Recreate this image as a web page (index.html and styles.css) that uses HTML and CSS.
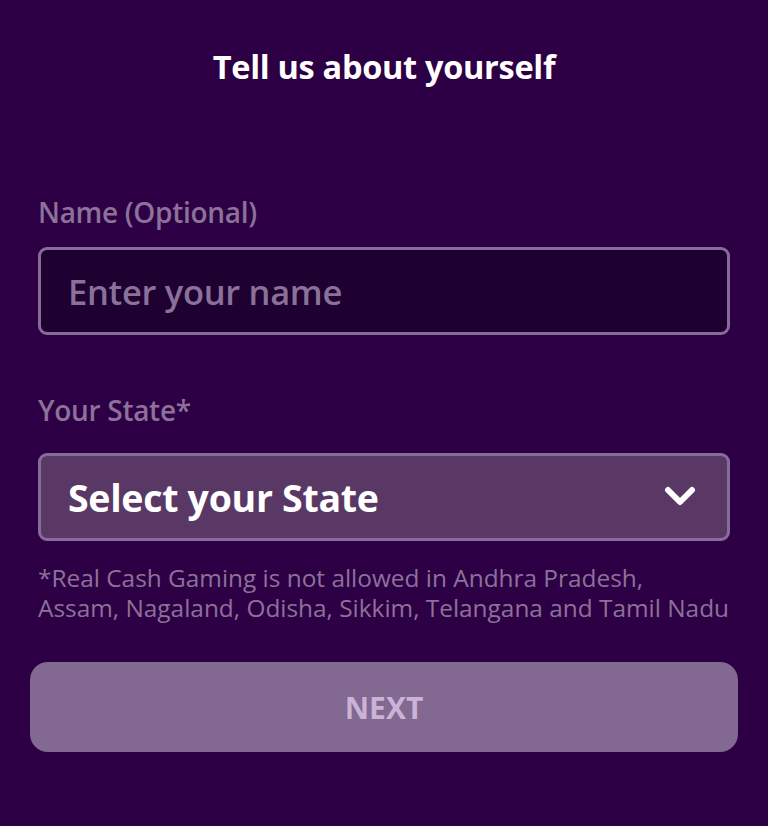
FILE: index.html
```html
<!DOCTYPE html>
<html lang="en">
<head>
<meta charset="utf-8">
<title>Tell us about yourself</title>
<link rel="stylesheet" href="styles.css">
</head>
<body>
<main class="page">
  <h1 class="title">Tell us about yourself</h1>
  <form class="form">
    <div class="field field-name">
      <label class="label label-name" for="name">Name (Optional)</label>
      <div class="input-box">
        <input id="name" class="input" type="text" placeholder="Enter your name">
      </div>
    </div>
    <div class="field field-state">
      <label class="label label-state">Your State*</label>
      <div class="select-box">
        <span class="select-text">Select your State</span>
        <svg class="chevron" width="32" height="22" viewBox="0 0 32 22" aria-hidden="true">
          <path d="M4 4 L16 16 L28 4" fill="none" stroke="#ffffff" stroke-width="6" stroke-linecap="round" stroke-linejoin="round"/>
        </svg>
      </div>
      <p class="note">*Real Cash Gaming is not allowed in Andhra Pradesh,<br>Assam, Nagaland, Odisha, Sikkim, Telangana and Tamil Nadu</p>
    </div>
    <button type="button" class="next">NEXT</button>
  </form>
</main>
</body>
</html>
```
FILE: styles.css
```css
html, body {
  margin: 0;
  padding: 0;
  background: #2d0045;
}
body {
  font-family: "Open Sans", "Noto Sans", "Liberation Sans", sans-serif;
  width: 768px;
  height: 826px;
  overflow: hidden;
}
.page {
  padding: 47px 30px 0 30px;
}
.title {
  margin: 0;
  text-align: center;
  color: #ffffff;
  font-size: 32.5px;
  font-weight: 700;
  line-height: 40px;
  letter-spacing: -0.3px;
}
.form {
  display: flex;
  flex-direction: column;
  margin-top: 109px;
}
.field {
  display: flex;
  flex-direction: column;
  padding: 0 8px;
}
.label {
  color: #8c7199;
  font-size: 28px;
  font-weight: 600;
  line-height: 32px;
  letter-spacing: -0.3px;
}
.label-name {
  margin-bottom: 19px;
}
.label-state {
  margin-bottom: 27px;
}
.field-state {
  margin-top: 59px;
}
.input-box {
  height: 88px;
  box-sizing: border-box;
  border: 3px solid #876b98;
  border-radius: 9px;
  background: #1e0031;
  display: flex;
  align-items: center;
  padding: 0 27px;
}
.input {
  flex: 1;
  border: 0;
  outline: 0;
  background: transparent;
  font-family: inherit;
  font-size: 34.5px;
  font-weight: 600;
  letter-spacing: -0.3px;
  color: #ffffff;
  padding: 0;
}
.input::placeholder {
  color: #8a7199;
  opacity: 1;
}
.select-box {
  height: 88px;
  box-sizing: border-box;
  border: 3px solid #876b98;
  border-radius: 9px;
  background: #5a3866;
  display: flex;
  align-items: center;
  justify-content: space-between;
  padding: 0 31px 0 27px;
}
.select-text {
  color: #ffffff;
  font-size: 37.5px;
  font-weight: 700;
  letter-spacing: -0.3px;
}
.chevron {
  display: block;
}
.note {
  margin: 22px 0 0 0;
  color: #8c7199;
  font-size: 24.4px;
  line-height: 30px;
  white-space: nowrap;
}
.next {
  margin-top: 39px;
  height: 90px;
  border: 0;
  border-radius: 18px;
  background: #836891;
  color: #c9b3d6;
  font-family: inherit;
  font-size: 30px;
  font-weight: 700;
}
```
